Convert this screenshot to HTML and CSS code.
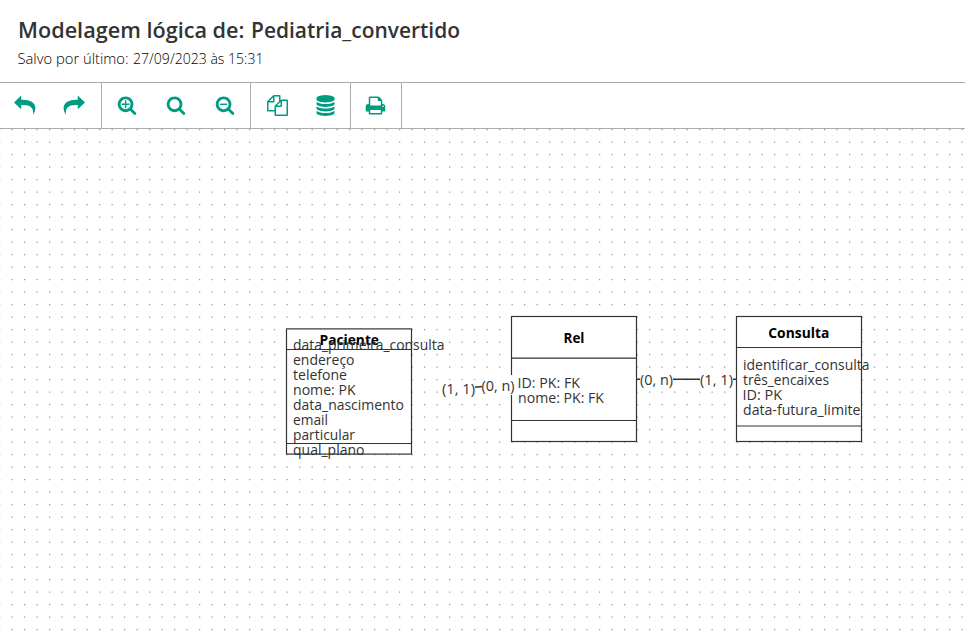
FILE: index.html
```html
<!DOCTYPE html>
<html lang="pt-BR">
<head>
<meta charset="utf-8">
<title>Modelagem lógica</title>
<link rel="stylesheet" href="styles.css">
</head>
<body>
<header class="header">
  <svg class="heading" width="600" height="82" role="img">
    <text class="title" x="18" y="38" textLength="226.500" lengthAdjust="spacingAndGlyphs">Modelagem lógica de:</text>
    <text class="title" x="251" y="38" textLength="209" lengthAdjust="spacingAndGlyphs">Pediatria_convertido</text>
    <text class="saved" x="17.5" y="64" textLength="111" lengthAdjust="spacingAndGlyphs">Salvo por último:</text>
    <text class="saved" x="133" y="64" textLength="130.500" lengthAdjust="spacingAndGlyphs">27/09/2023 às 15:31</text>
  </svg>
</header>
<nav class="toolbar">
  <div class="group history">
    <button aria-label="Desfazer"><svg class="arrow" viewBox="0 0 22 20"><path d="M0 7.5 7.2.5v4.2C15 4.3 21.4 7 21.4 13q0 3-1.8 6.2-.2.4-.4 0C19.6 13 17 9.600 7.200 10v4.200z"/></svg></button>
    <button aria-label="Refazer"><svg class="arrow flip" viewBox="0 0 22 20"><path d="M0 7.5 7.2.5v4.2C15 4.3 21.4 7 21.4 13q0 3-1.8 6.2-.2.4-.4 0C19.6 13 17 9.600 7.200 10v4.200z"/></svg></button>
  </div>
  <div class="group zoom">
    <button aria-label="Ampliar"><svg class="icon" viewBox="0 0 1792 1792"><path d="M1216 832q0-185-131.500-316.500t-316.500-131.500-316.500 131.500-131.500 316.500 131.500 316.500 316.500 131.500 316.500-131.500 131.500-316.500zm512 832q0 52-38 90t-90 38q-54 0-90-38l-343-342q-179 124-399 124-143 0-273.500-55.500t-225-150-150-225-55.500-273.500 55.500-273.500 150-225 225-150 273.500-55.500 273.500 55.500 225 150 150 225 55.500 273.500q0 220-124 399l343 343q37 37 37 90z"/><path d="M704 480h128v288h288v128H832v288H704V896H416V768h288z"/></svg></button>
    <button aria-label="Zoom original"><svg class="icon" viewBox="0 0 1792 1792"><path d="M1216 832q0-185-131.500-316.500t-316.500-131.500-316.500 131.500-131.500 316.500 131.500 316.500 316.500 131.500 316.500-131.500 131.500-316.500zm512 832q0 52-38 90t-90 38q-54 0-90-38l-343-342q-179 124-399 124-143 0-273.500-55.500t-225-150-150-225-55.500-273.500 55.500-273.500 150-225 225-150 273.500-55.500 273.500 55.500 225 150 150 225 55.500 273.500q0 220-124 399l343 343q37 37 37 90z"/></svg></button>
    <button aria-label="Reduzir"><svg class="icon" viewBox="0 0 1792 1792"><path d="M1216 832q0-185-131.500-316.500t-316.500-131.500-316.500 131.500-131.500 316.500 131.500 316.500 316.500 131.500 316.500-131.500 131.500-316.500zm512 832q0 52-38 90t-90 38q-54 0-90-38l-343-342q-179 124-399 124-143 0-273.500-55.500t-225-150-150-225-55.500-273.500 55.500-273.500 150-225 225-150 273.500-55.500 273.500 55.500 225 150 150 225 55.500 273.500q0 220-124 399l343 343q37 37 37 90z"/><path d="M448 768h640v128H448z"/></svg></button>
  </div>
  <div class="group data">
    <button aria-label="Copiar"><svg class="icon wide" viewBox="0 0 1792 1792"><path d="M1696 384q40 0 68 28t28 68v1216q0 40-28 68t-68 28h-960q-40 0-68-28t-28-68v-288h-544q-40 0-68-28t-28-68v-672q0-40 20-88t48-76l408-408q28-28 76-48t88-20h416q40 0 68 28t28 68v328q68-40 128-40h416zm-544 213l-299 299h299v-299zm-640-384l-299 299h299v-299zm196 647l316-316v-416h-384v416q0 40-28 68t-68 28h-416v640h512v-256q0-40 20-88t48-76zm956 804v-1152h-384v416q0 40-28 68t-68 28h-416v640h896z"/></svg></button>
    <button aria-label="Banco de dados"><svg class="icon wide" viewBox="0 0 1792 1792"><path d="M896 768q237 0 443-43t325-127v170q0 69-103 128t-280 93.500-385 34.500-385-34.500-280-93.500-103-128v-170q119 84 325 127t443 43zm0 768q237 0 443-43t325-127v170q0 69-103 128t-280 93.500-385 34.500-385-34.500-280-93.500-103-128v-170q119 84 325 127t443 43zm0-384q237 0 443-43t325-127v170q0 69-103 128t-280 93.500-385 34.500-385-34.500-280-93.500-103-128v-170q119 84 325 127t443 43zm0-1152q208 0 385 34.500t280 93.500 103 128v128q0 69-103 128t-280 93.500-385 34.500-385-34.500-280-93.500-103-128v-128q0-69 103-128t280-93.500 385-34.500z"/></svg></button>
  </div>
  <div class="group output">
    <button aria-label="Imprimir"><svg class="icon wide" viewBox="0 0 1792 1792"><path d="M448 1536h896v-256h-896v256zm0-640h896v-384h-160q-40 0-68-28t-28-68v-160h-640v640zm1152 64q0-26-19-45t-45-19-45 19-19 45 19 45 45 19 45-19 19-45zm128 0v416q0 13-9.500 22.500t-22.500 9.500h-224v160q0 40-28 68t-68 28h-960q-40 0-68-28t-28-68v-160h-224q-13 0-22.500-9.500t-9.500-22.500v-416q0-79 56.500-135.500t135.500-56.500h64v-544q0-40 28-68t68-28h672q40 0 88 20t76 48l152 152q28 28 48 76t20 88v256h64q79 0 135.500 56.500t56.500 135.500z"/></svg></button>
  </div>
</nav>
<main class="canvas">
  <svg class="diagram" viewBox="0 129 965 508" width="965" height="508">
    <defs>
      <pattern id="grid" x="-1" y="129" width="25" height="25" patternUnits="userSpaceOnUse">
        <path class="dot" d="M0 0h1.250v1.250H0zM12.500 0h1.250v1.250H12.500zM0 12.500h1.250v1.250H0zM12.500 12.500h1.250v1.250H12.500z"/>
      </pattern>
    </defs>
    <rect x="0" y="129" width="965" height="502" fill="url(#grid)"/>

    <g class="entity">
      <rect x="286.500" y="328.900" width="125" height="125.200"/>
      <path d="M286.500 349.500h125M286.500 443.500h125"/>
    </g>
    <g class="entity">
      <rect x="511.500" y="316.500" width="125" height="125"/>
      <path d="M511.500 358.200h125M511.500 420.500h125"/>
    </g>
    <g class="entity">
      <rect x="736.500" y="316.500" width="125" height="125"/>
      <path d="M736.500 347.500h125M736.500 426h125"/>
    </g>

    <path class="link" d="M474 387.200 483 386.400"/>
    <path class="link" d="M636.500 379.200h100"/>
    <path class="label-bg" d="M442 380h33v18h-33zM482 375h32.500v20H482zM640 370h33v18h-33zM700 370h33v18h-33z"/>

    <g class="name">
      <text x="319.500" y="344.500" textLength="59.500">Paciente</text>
      <text x="563.500" y="342.500" textLength="21">Rel</text>
      <text x="768.300" y="338" textLength="61">Consulta</text>
    </g>
    <g class="attr">
      <text x="293" y="350" textLength="151.500">data_primeira_consulta</text>
      <text x="293" y="365" textLength="61.500">endereço</text>
      <text x="293" y="380" textLength="54">telefone</text>
      <text x="293" y="395" textLength="62.500">nome: PK</text>
      <text x="293" y="410" textLength="111">data_nascimento</text>
      <text x="293" y="425" textLength="35">email</text>
      <text x="293" y="440" textLength="62">particular</text>
      <text x="293" y="455" textLength="71.500">qual_plano</text>
      <text x="517.500" y="388" textLength="62.500">ID: PK: FK</text>
      <text x="518" y="403" textLength="86">nome: PK: FK</text>
      <text x="743" y="370" textLength="126.500">identificar_consulta</text>
      <text x="743" y="385" textLength="86">três_encaixes</text>
      <text x="742.500" y="400" textLength="39.500">ID: PK</text>
      <text x="743" y="415" textLength="117.500">data-futura_limite</text>
      <text x="442" y="394" textLength="33">(1, 1)</text>
      <text x="481.500" y="391" textLength="33">(0, n)</text>
      <text x="640" y="385" textLength="33">(0, n)</text>
      <text x="700" y="385" textLength="33">(1, 1)</text>
    </g>
  </svg>
</main>
<script src="script.js"></script>
</body>
</html>
```
FILE: styles.css
```css
* { box-sizing: border-box; }
body {
  margin: 0;
  height: 637px;
  overflow: hidden;
  display: flex;
  flex-direction: column;
  background: #fff;
  font-family: "Open Sans", "Noto Sans", sans-serif;
}
.header { height: 82px; }
.heading { display: block; }
.title { font-size: 21.8px; font-weight: 560; fill: #333; }
.saved { font-size: 14px; font-weight: 300; fill: #000; }
.toolbar {
  display: flex;
  height: 47px;
  border-top: 1px solid #acacac;
  border-bottom: 1px solid #acacac;
}
.group { display: flex; border-right: 1px solid #acacac; }
.history { width: 102px; padding-right: 2px; }
.zoom { width: 149px; padding-right: 1px; }
.data { width: 100px; padding-left: 2px; }
.output { width: 51px; padding-right: 1px; }
button {
  flex: 1;
  display: flex;
  align-items: center;
  justify-content: center;
  padding: 0 0 1px;
  border: 0;
  background: none;
}
.icon { width: 20px; height: 20px; fill: #009c82; }
.wide { width: 21px; height: 21px; }
.arrow { width: 22px; height: 20px; fill: #009c82; }
.flip { transform: scaleX(-1); }
.canvas { height: 508px; }
.diagram { display: block; }
.dot { fill: #999; }
.entity rect { fill: #fff; stroke: #333; stroke-width: 1.2; }
.entity path { fill: none; stroke: #333; stroke-width: 1.2; }
.link { fill: none; stroke: #333; stroke-width: 1.5; }
.label-bg { fill: #fff; }
.name { font-size: 14.5px; font-weight: 700; fill: #000; }
.attr { font-size: 14.5px; fill: #333; }
```
FILE: script.js
```js
document.querySelectorAll('.diagram text').forEach(function (label) {
  label.setAttribute('lengthAdjust', 'spacingAndGlyphs');
});
```
